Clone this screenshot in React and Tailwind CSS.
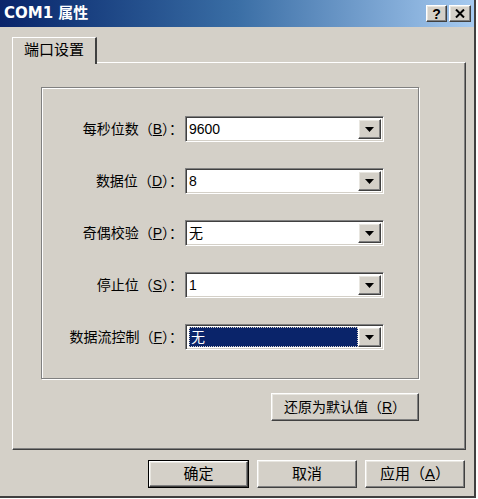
const font = { fontFamily: '"Liberation Sans", "Noto Sans CJK SC", sans-serif' };

const raised =
  'border border-t-white border-l-white border-r-[#404040] border-b-[#404040] shadow-[inset_-1px_-1px_0_#808080,inset_1px_1px_0_#e8e6e0]';

const DropArrow = () => (
  <svg width="9" height="5" viewBox="0 0 9 5">
    <path d="M0 0h9L4.5 5z" fill="#000" />
  </svg>
);

const Combo = ({ value, selected }) => (
  <div className="flex h-[26px] w-[199px] border border-t-[#808080] border-l-[#808080] border-r-white border-b-white shadow-[inset_1px_1px_0_#404040,inset_-1px_-1px_0_#d4d0c8] bg-white p-[2px]">
    <div className="flex flex-1 items-center pl-[1px]">
      {selected ? (
        <span className="flex h-full flex-1 items-center bg-[#0a246a] pl-[2px] text-[14px] text-white outline-1 outline-dotted outline-[#d4d0c8] -outline-offset-1">
          {value}
        </span>
      ) : (
        <span className="text-[14px] text-black">{value}</span>
      )}
    </div>
    <div className={`flex w-[23px] items-center justify-center bg-[#d4d0c8] ${raised}`}>
      <DropArrow />
    </div>
  </div>
);

const Row = ({ label, mnemonic, value, selected }) => (
  <div className="flex items-center justify-end">
    <span className="mr-[2px] text-[14px] text-black">
      {label}（<u>{mnemonic}</u>）：
    </span>
    <Combo value={value} selected={selected} />
  </div>
);

const Button = ({ children, isDefault, className = '' }) => (
  <div className={`${isDefault ? 'border border-black' : ''} ${className}`}>
    <div
      className={`flex h-full w-full items-center justify-center bg-[#d4d0c8] text-black ${raised}`}
    >
      {children}
    </div>
  </div>
);

const rows = [
  { label: '每秒位数', mnemonic: 'B', value: '9600' },
  { label: '数据位', mnemonic: 'D', value: '8' },
  { label: '奇偶校验', mnemonic: 'P', value: '无' },
  { label: '停止位', mnemonic: 'S', value: '1' },
  { label: '数据流控制', mnemonic: 'F', value: '无', selected: true },
];

export default function App() {
  return (
    <div className="h-[499px] w-[478px] bg-white" style={font}>
      <div className="flex h-[498px] w-[476px] flex-col border-r-2 border-b-2 border-r-[#404040] border-b-[#404040] bg-[#d4d0c8]">
        {/* Title bar */}
        <div className="flex h-[27px] items-center justify-between bg-gradient-to-r from-[#0a246a] via-[#3a6ea5] to-[#a6caf0] pl-[4px] pr-[3px]">
          <span className="text-[15px] font-bold text-white" style={{ fontFamily: '"DejaVu Sans", "Noto Sans CJK SC", sans-serif' }}>
            COM1 属性
          </span>
          <div className="flex gap-[2px]">
            <div className={`flex h-[17px] w-[21px] items-center justify-center bg-[#d4d0c8] ${raised}`}>
              <span className="text-[14px] leading-none font-bold text-black">?</span>
            </div>
            <div className={`flex h-[17px] w-[22px] items-center justify-center bg-[#d4d0c8] ${raised}`}>
              <svg width="10" height="9" viewBox="0 0 10 9">
                <path d="M1 0.5l8 8M9 0.5l-8 8" stroke="#000" strokeWidth="2" />
              </svg>
            </div>
          </div>
        </div>

        {/* Body */}
        <div className="flex flex-1 flex-col px-[12px] pt-[10px]">
          {/* Tab */}
          <div className="relative z-10 -mb-[2px] flex h-[27px] w-[85px] items-center justify-center border-t border-l border-r-2 border-t-white border-l-white border-r-[#404040] bg-[#d4d0c8] pb-[2px] text-[15px] text-black">
            端口设置
          </div>

          {/* Tab panel */}
          <div className="flex h-[388px] w-[454px] flex-col border border-t-white border-l-white border-r-[#404040] border-b-[#404040] shadow-[inset_-1px_-1px_0_#808080] pt-[24px] pl-[28px]">
            {/* Group box */}
            <div className="flex h-[292px] w-[378px] flex-col gap-[26px] border border-[#808080] pt-[28px] pr-[34px] shadow-[1px_1px_0_white,inset_1px_1px_0_white]">
              {rows.map((r) => (
                <Row key={r.label} {...r} />
              ))}
            </div>
            <div className="mt-[14px] flex w-[378px] justify-end">
              <Button className="h-[28px] w-[148px] text-[14px]">
                还原为默认值（<u>R</u>）
              </Button>
            </div>
          </div>

          {/* Dialog buttons */}
          <div className="-mr-[3px] mt-[10px] flex justify-end gap-[8px]">
            <Button isDefault className="h-[28px] w-[101px] text-[15px]">
              确定
            </Button>
            <Button className="h-[28px] w-[100px] text-[15px]">取消</Button>
            <Button className="h-[28px] w-[100px] text-[15px]">
              应用（<u>A</u>）
            </Button>
          </div>
        </div>
      </div>
    </div>
  );
}
